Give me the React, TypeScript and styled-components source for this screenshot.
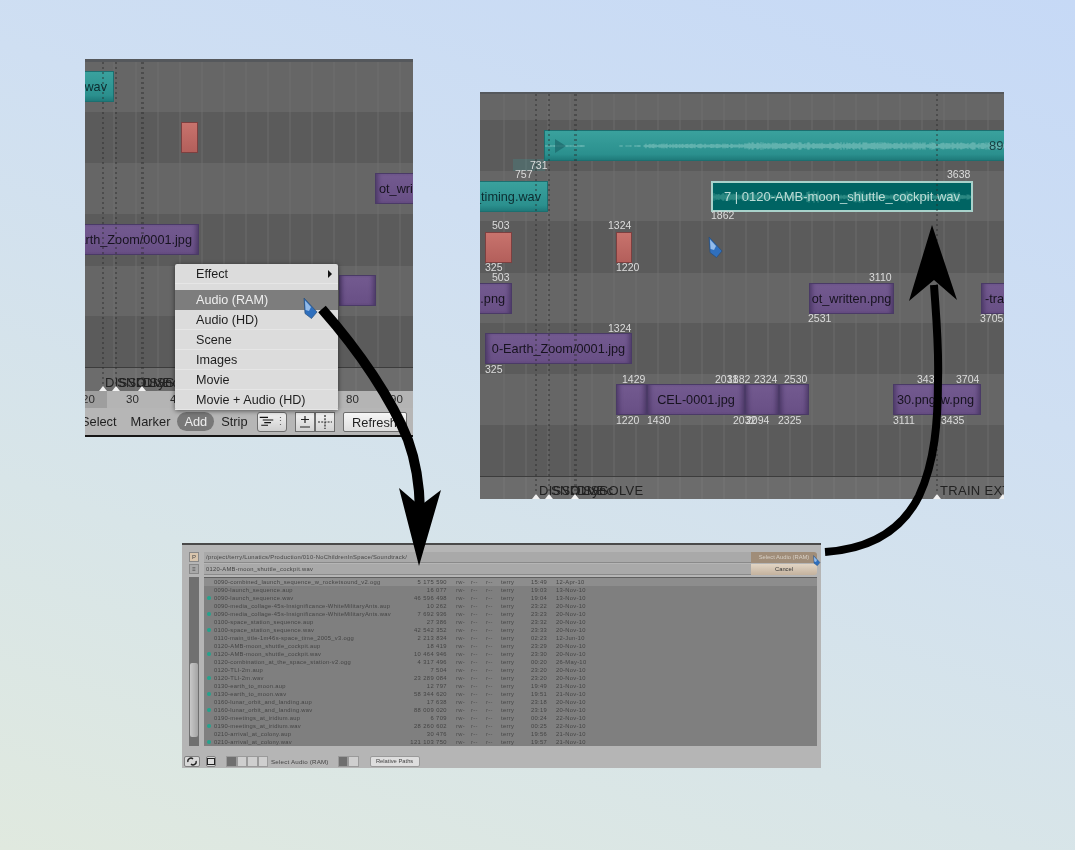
import React from 'react'
import styled, { createGlobalStyle } from 'styled-components'

const GlobalStyle = createGlobalStyle`
  html, body {
    margin: 0;
    padding: 0;
    height: 100%;
    overflow: hidden;
  }
  #root {
    height: 100%;
  }
`

type Kind = 'teal' | 'red' | 'purple' | 'selected' | 'ghost'
type Align = 'start' | 'center' | 'end'

interface StripData {
  kind: Kind
  x: number
  y: number
  w: number
  h?: number
  text?: string
  align?: Align
}

interface LabelData {
  x: number
  y: number
  text: string
}

const editorStrips: StripData[] = [
  { kind: 'teal', x: -10, y: 12, w: 39, text: 'wav', align: 'end' },
  { kind: 'red', x: 96, y: 63, w: 17 },
  { kind: 'purple', x: 290, y: 114, w: 60, text: 'ot_written.png', align: 'start' },
  { kind: 'purple', x: -40, y: 165, w: 154, text: '0-Earth_Zoom/0001.jpg', align: 'end' },
  { kind: 'purple', x: 254, y: 216, w: 37 },
]

const zoomStrips: StripData[] = [
  { kind: 'ghost', x: 33, y: 67, w: 32, h: 12 },
  { kind: 'teal', x: -30, y: 89, w: 98, text: '_timing.wav', align: 'end' },
  { kind: 'red', x: 5, y: 140, w: 27 },
  { kind: 'red', x: 136, y: 140, w: 16 },
  { kind: 'purple', x: -10, y: 191, w: 42, text: '.png', align: 'end' },
  { kind: 'purple', x: 329, y: 191, w: 85, text: 'ot_written.png' },
  { kind: 'purple', x: 501, y: 191, w: 40, text: '-trans', align: 'start' },
  { kind: 'purple', x: 5, y: 241, w: 147, text: '0-Earth_Zoom/0001.jpg' },
  { kind: 'purple', x: 136, y: 292, w: 31 },
  { kind: 'purple', x: 167, y: 292, w: 98, text: 'CEL-0001.jpg' },
  { kind: 'purple', x: 265, y: 292, w: 34 },
  { kind: 'purple', x: 299, y: 292, w: 30 },
  { kind: 'purple', x: 413, y: 292, w: 44, text: '30.png', align: 'start' },
  { kind: 'purple', x: 457, y: 292, w: 44, text: 'w.png', align: 'end' },
]

const zoomLabels: LabelData[] = [
  { x: 50, y: 73, text: '731' },
  { x: 35, y: 82, text: '757' },
  { x: 467, y: 82, text: '3638' },
  { x: 231, y: 123, text: '1862' },
  { x: 12, y: 133, text: '503' },
  { x: 128, y: 133, text: '1324' },
  { x: 5, y: 175, text: '325' },
  { x: 136, y: 175, text: '1220' },
  { x: 12, y: 185, text: '503' },
  { x: 389, y: 185, text: '3110' },
  { x: 328, y: 226, text: '2531' },
  { x: 500, y: 226, text: '3705' },
  { x: 128, y: 236, text: '1324' },
  { x: 5, y: 277, text: '325' },
  { x: 142, y: 287, text: '1429' },
  { x: 235, y: 287, text: '2031' },
  { x: 247, y: 287, text: '1882' },
  { x: 274, y: 287, text: '2324' },
  { x: 304, y: 287, text: '2530' },
  { x: 437, y: 287, text: '3434' },
  { x: 476, y: 287, text: '3704' },
  { x: 136, y: 328, text: '1220' },
  { x: 167, y: 328, text: '1430' },
  { x: 253, y: 328, text: '2032' },
  { x: 266, y: 328, text: '2094' },
  { x: 298, y: 328, text: '2325' },
  { x: 413, y: 328, text: '3111' },
  { x: 461, y: 328, text: '3435' },
]

const files = [
  ['0090-combined_launch_sequence_w_rocketsound_v2.ogg', '5 175 590', '15:49', '12-Apr-10', 0],
  ['0090-launch_sequence.aup', '16 077', '19:03', '13-Nov-10', 0],
  ['0090-launch_sequence.wav', '46 596 498', '19:04', '13-Nov-10', 1],
  ['0090-media_collage-45s-Insignificance-WhiteMilitaryAnts.aup', '10 262', '23:22', '20-Nov-10', 0],
  ['0090-media_collage-45s-Insignificance-WhiteMilitaryAnts.wav', '7 692 936', '23:23', '20-Nov-10', 1],
  ['0100-space_station_sequence.aup', '27 386', '23:32', '20-Nov-10', 0],
  ['0100-space_station_sequence.wav', '42 542 352', '23:33', '20-Nov-10', 1],
  ['0110-main_title-1m46s-space_time_2005_v3.ogg', '2 213 834', '02:23', '12-Jun-10', 0],
  ['0120-AMB-moon_shuttle_cockpit.aup', '18 419', '23:29', '20-Nov-10', 0],
  ['0120-AMB-moon_shuttle_cockpit.wav', '10 464 946', '23:30', '20-Nov-10', 1],
  ['0120-combination_at_the_space_station-v2.ogg', '4 317 496', '00:20', '26-May-10', 0],
  ['0120-TLI-2m.aup', '7 504', '23:20', '20-Nov-10', 0],
  ['0120-TLI-2m.wav', '23 289 084', '23:20', '20-Nov-10', 1],
  ['0130-earth_to_moon.aup', '12 797', '19:49', '21-Nov-10', 0],
  ['0130-earth_to_moon.wav', '58 344 620', '19:51', '21-Nov-10', 1],
  ['0160-lunar_orbit_and_landing.aup', '17 638', '23:18', '20-Nov-10', 0],
  ['0160-lunar_orbit_and_landing.wav', '88 009 020', '23:19', '20-Nov-10', 1],
  ['0190-meetings_at_iridium.aup', '6 709', '00:24', '22-Nov-10', 0],
  ['0190-meetings_at_iridium.wav', '28 260 602', '00:25', '22-Nov-10', 1],
  ['0210-arrival_at_colony.aup', '30 476', '19:56', '21-Nov-10', 0],
  ['0210-arrival_at_colony.wav', '121 103 750', '19:57', '21-Nov-10', 1],
] as const

// little repeatable noise so the wave forms look irregular
const noise = (x: number) => {
  const v = Math.sin(x * 12.9898) * 43758.5453
  return v - Math.floor(v)
}

const wavePath = (width: number, mid: number, amp: (x: number) => number) => {
  let d = ''
  for (let x = 0; x < width; x += 1) {
    const a = amp(x)
    if (a <= 0) continue
    const h = a * (0.35 + 0.65 * noise(x))
    d += `M${x} ${(mid - h).toFixed(1)}V${(mid + h).toFixed(1)}`
  }
  return d
}

const longWave = wavePath(460, 15, (x) => {
  if (x < 40) return 1
  if (x < 75) return 0
  if (x < 100) return x % 9 < 6 ? 1 : 0
  if (x < 200) return 2.4
  return 3.8
})

const selectedWave = wavePath(262, 14, (x) => {
  if (x < 60) return 4
  return x % 47 < 12 ? 6 : 2.5
})

const ArrowOverlay = () => (
  <Overlay viewBox="0 0 1075 850">
    <path
      d="M322 309C360 352 392 400 408 440C416 462 420 484 420 515"
      fill="none"
      stroke="#000"
      strokeWidth="10"
    />
    <polygon points="419,566 399,488 420,506 441,490" fill="#000" />
    <path
      d="M825 552C870 549 902 530 919 496C935 462 938 420 938 380C939 345 936 315 934 285"
      fill="none"
      stroke="#000"
      strokeWidth="8"
    />
    <polygon points="932,225 909,301 934,280 957,300" fill="#000" />
  </Overlay>
)

const Cursor: React.FC<{ x: number; y: number; scale?: number }> = ({ x, y, scale = 1 }) => (
  <CursorSvg $x={x} $y={y} width={15 * scale} height={22 * scale} viewBox="0 0 15 22">
    <polygon points="1,1 14,15 8.5,21.5 2,16.5" fill="#2f6fbd" stroke="#2a4d78" strokeWidth="0.7" />
    <polygon points="2,3.5 8,10 6,14 2.6,13" fill="#93bbea" />
  </CursorSvg>
)

const SplitIcon = () => (
  <svg width="20" height="15" viewBox="0 0 20 15">
    <path d="M1 2h11M5 5.5h14M7 9h9M3 12.5h9" stroke="#111" strokeWidth="1.5" fill="none" />
  </svg>
)

const PlusMinusIcon = () => (
  <svg width="14" height="14" viewBox="0 0 14 14">
    <path d="M7 1v7M3 4.5h8M2 12h10" stroke="#222" strokeWidth="1.2" fill="none" />
  </svg>
)

const CrossIcon = () => (
  <svg width="16" height="16" viewBox="0 0 16 16">
    <path d="M8 1v14M1 8h14" stroke="#222" strokeWidth="1.2" strokeDasharray="2 1.2" fill="none" />
  </svg>
)

const renderStrips = (strips: StripData[]) =>
  strips.map((strip, i) => (
    <Strip
      key={i}
      $kind={strip.kind}
      $x={strip.x}
      $y={strip.y}
      $w={strip.w}
      $h={strip.h ?? 31}
      $align={strip.align ?? 'center'}
    >
      {strip.text}
    </Strip>
  ))

const App: React.FC = () => {
  return (
    <Desktop>
      <GlobalStyle />

      <EditorWindow $x={85} $y={59} $w={328} $h={381} $gridX={8}>
        <TopEdge />
        <Track $h={50} />
        <Track $h={51} $dark />
        <Track $h={51} />
        <Track $h={52} $dark />
        <Track $h={50} />
        <Track $h={51} $dark />
        <MarkerBand $h={24}>
          <MarkerText $x={20}>DISSOLVE</MarkerText>
          <MarkerText $x={32}>SND Sync</MarkerText>
          <MarkerText $x={58}>DISSOLVE</MarkerText>
        </MarkerBand>
        <Ruler>
          <RulerShade />
          <RulerNumber $x={-3}>20</RulerNumber>
          <RulerNumber $x={41}>30</RulerNumber>
          <RulerNumber $x={85}>40</RulerNumber>
          <RulerNumber $x={261}>80</RulerNumber>
          <RulerNumber $x={305}>90</RulerNumber>
        </Ruler>
        <HeaderBar>
          <MenuWord>Select</MenuWord>
          <MenuWord>Marker</MenuWord>
          <MenuPill>Add</MenuPill>
          <MenuWord>Strip</MenuWord>
          <ModeSelect>
            <SplitIcon />
            <UpDown>⋮</UpDown>
          </ModeSelect>
          <ButtonGroup>
            <IconButton>
              <PlusMinusIcon />
            </IconButton>
            <IconButton>
              <CrossIcon />
            </IconButton>
          </ButtonGroup>
          <RefreshButton>Refresh</RefreshButton>
        </HeaderBar>

        {renderStrips(editorStrips)}
        <DotLine $x={17} $y={3} $h={328} />
        <DotLine $x={30} $y={3} $h={328} />
        <DotLine $x={56} $y={3} $h={328} $thick />
        <MarkerArrow $x={17} $y={327} />
        <MarkerArrow $x={30} $y={327} />
        <MarkerArrow $x={56} $y={327} />

        <AddMenu>
          <MenuEntry>
            Effect
            <SubArrow />
          </MenuEntry>
          <MenuSeparator />
          <MenuEntry $active>Audio (RAM)</MenuEntry>
          <MenuEntry>Audio (HD)</MenuEntry>
          <MenuEntry>Scene</MenuEntry>
          <MenuEntry>Images</MenuEntry>
          <MenuEntry>Movie</MenuEntry>
          <MenuEntry>Movie + Audio (HD)</MenuEntry>
        </AddMenu>
      </EditorWindow>

      <EditorWindow $x={480} $y={92} $w={524} $h={407} $gridX={3}>
        <TopEdge $h={2} />
        <Track $h={26} />
        <Track $h={51} $dark />
        <Track $h={50} />
        <Track $h={52} $dark />
        <Track $h={50} />
        <Track $h={51} $dark />
        <Track $h={51} />
        <Track $h={51} $dark />
        <MarkerBand $h={23}>
          <MarkerText $x={59}>DISSOLVE</MarkerText>
          <MarkerText $x={71}>SND Sync</MarkerText>
          <MarkerText $x={97}>DISSOLVE</MarkerText>
          <MarkerText $x={460}>TRAIN EXT</MarkerText>
        </MarkerBand>

        {renderStrips(zoomStrips)}
        <Strip $kind="teal" $x={64} $y={38} $w={480} $h={31} $align="center">
          <WaveSvg viewBox="0 0 460 29" width={460} height={29}>
            <path d={longWave} stroke="#86c8c3" strokeWidth="1" fill="none" opacity="0.7" />
            <polygon points="10,8 10,22 21,15" fill="#1d6a6c" opacity="0.75" />
          </WaveSvg>
        </Strip>
        <Strip $kind="selected" $x={231} $y={89} $w={262} $h={31} $align="center">
          <WaveSvg viewBox="0 0 262 29" width={262} height={29}>
            <path d={selectedWave} stroke="#3f9a92" strokeWidth="1" fill="none" opacity="0.85" />
          </WaveSvg>
          <SelectedText>7 | 0120-AMB-moon_shuttle_cockpit.wav</SelectedText>
        </Strip>
        <StripCut $x={509} $y={46}>89</StripCut>

        <DotLine $x={55} $y={2} $h={405} />
        <DotLine $x={68} $y={2} $h={405} />
        <DotLine $x={94} $y={2} $h={405} $thick />
        <DotLine $x={456} $y={2} $h={405} />
        <MarkerArrow $x={55} $y={402} />
        <MarkerArrow $x={68} $y={402} />
        <MarkerArrow $x={94} $y={402} />
        <MarkerArrow $x={456} $y={402} />
        <MarkerArrow $x={522} $y={402} />

        {zoomLabels.map((label) => (
          <FrameLabel key={`${label.x}-${label.y}`} $x={label.x} $y={label.y}>
            {label.text}
          </FrameLabel>
        ))}
      </EditorWindow>

      <FileWindow>
        <PathRow>
          <SmallToggle $warm>P</SmallToggle>
          <PathField>/project/terry/Lunatics/Production/010-NoChildrenInSpace/Soundtrack/</PathField>
          <ActionButton $accent>Select Audio (RAM)</ActionButton>
        </PathRow>
        <PathRow>
          <SmallToggle>≡</SmallToggle>
          <PathField>0120-AMB-moon_shuttle_cockpit.wav</PathField>
          <ActionButton>Cancel</ActionButton>
        </PathRow>
        <ListArea>
          <ScrollTrack>
            <ScrollThumb />
          </ScrollTrack>
          <FileList>
            {files.map(([name, size, time, date, audio], i) => (
              <FileRow key={name} $first={i === 0}>
                <span>{audio ? <AudioDot /> : null}</span>
                <span>{name}</span>
                <FileSize>{size}</FileSize>
                <Perms>
                  <span>rw-</span>
                  <span>r--</span>
                  <span>r--</span>
                </Perms>
                <span>terry</span>
                <span>{time}</span>
                <span>{date}</span>
              </FileRow>
            ))}
          </FileList>
        </ListArea>
        <FileToolbar>
          <ToolGroup $w={16}>
            <svg width="10" height="9" viewBox="0 0 10 9">
              <path d="M1 5a3 3 0 0 1 5-3M9 4a3 3 0 0 1-5 3" stroke="#222" fill="none" strokeWidth="1.4" />
            </svg>
          </ToolGroup>
          <ToolGroup $w={10}>
            <svg width="8" height="7" viewBox="0 0 8 7">
              <rect x="0.5" y="0.5" width="7" height="6" fill="#ddd" stroke="#222" />
            </svg>
          </ToolGroup>
          <ToolSet>
            <ToolCell $on />
            <ToolCell />
            <ToolCell />
            <ToolCell />
          </ToolSet>
          <ToolLabel>Select Audio (RAM)</ToolLabel>
          <ToolSet>
            <ToolCell $on />
            <ToolCell />
          </ToolSet>
          <PathsButton>Relative Paths</PathsButton>
        </FileToolbar>
      </FileWindow>

      <ArrowOverlay />
      <Cursor x={303} y={297} />
      <Cursor x={708} y={236} />
      <Cursor x={813} y={555} scale={0.5} />
    </Desktop>
  )
}

const Desktop = styled.div`
  position: relative;
  width: 1075px;
  height: 850px;
  overflow: hidden;
  background: linear-gradient(200deg, #c6d9f6 0%, #cfdff2 35%, #d8e5e8 70%, #e0e9df 100%);
  font-family: 'Liberation Sans', Arial, sans-serif;
`

const EditorWindow = styled.div<{ $x: number; $y: number; $w: number; $h: number; $gridX: number }>`
  --grid-x: ${(p) => p.$gridX}px;
  position: absolute;
  left: ${(p) => p.$x}px;
  top: ${(p) => p.$y}px;
  width: ${(p) => p.$w}px;
  height: ${(p) => p.$h}px;
  display: flex;
  flex-direction: column;
  overflow: hidden;
  filter: blur(0.5px);
`

const TopEdge = styled.div<{ $h?: number }>`
  height: ${(p) => p.$h ?? 3}px;
  background: #55585c;
`

const gridLines = (alpha: number) =>
  `repeating-linear-gradient(90deg, transparent 0 20px, rgba(255, 255, 255, ${alpha}) 20px 22px)`

const Track = styled.div<{ $h: number; $dark?: boolean }>`
  height: ${(p) => p.$h}px;
  background-color: ${(p) => (p.$dark ? '#5b5b5b' : '#666666')};
  background-image: ${(p) => gridLines(p.$dark ? 0.05 : 0.025)};
  background-position: var(--grid-x) 0;
`

const MarkerBand = styled.div<{ $h: number }>`
  position: relative;
  height: ${(p) => p.$h}px;
  box-sizing: border-box;
  border-top: 1px solid #3c3c3c;
  background-color: #6c6c6c;
  background-image: ${gridLines(0.03)};
  background-position: var(--grid-x) 0;
`

const MarkerText = styled.span<{ $x: number }>`
  position: absolute;
  left: ${(p) => p.$x}px;
  bottom: 1px;
  font-size: 13px;
  line-height: 15px;
  letter-spacing: 0.3px;
  color: #222;
  white-space: nowrap;
`

const MarkerArrow = styled.div<{ $x: number; $y: number }>`
  position: absolute;
  left: ${(p) => p.$x - 3}px;
  top: ${(p) => p.$y}px;
  width: 0;
  height: 0;
  border-left: 4px solid transparent;
  border-right: 4px solid transparent;
  border-bottom: 5px solid #f2f2f2;
`

const DotLine = styled.div<{ $x: number; $y: number; $h: number; $thick?: boolean }>`
  position: absolute;
  left: ${(p) => p.$x}px;
  top: ${(p) => p.$y}px;
  width: ${(p) => (p.$thick ? 3 : 2)}px;
  height: ${(p) => p.$h}px;
  background-image: repeating-linear-gradient(180deg, rgba(40, 40, 40, 0.42) 0 2px, transparent 2px 5px);
`

const stripFill: Record<Kind, string> = {
  teal: 'linear-gradient(#3aa19d, #2b908e 80%, #1f7a7a)',
  red: 'linear-gradient(#c8736d, #b35f5b)',
  purple: 'linear-gradient(#735a90, #684f85)',
  selected: '#006463',
  ghost: 'rgba(60, 150, 150, 0.25)',
}

const stripEdge: Record<Kind, string> = {
  teal: '1px solid #1c6f70',
  red: '1px solid #7c4040',
  purple: '1px solid #4a3a66',
  selected: '2px solid #a9d2cb',
  ghost: 'none',
}

const stripInk: Record<Kind, string> = {
  teal: '#0c2c30',
  red: '#222222',
  purple: '#17131f',
  selected: '#bcdcd6',
  ghost: 'transparent',
}

const stripJustify: Record<Align, string> = {
  start: 'flex-start',
  center: 'center',
  end: 'flex-end',
}

const Strip = styled.div<{ $kind: Kind; $x: number; $y: number; $w: number; $h: number; $align: Align }>`
  position: absolute;
  left: ${(p) => p.$x}px;
  top: ${(p) => p.$y}px;
  width: ${(p) => p.$w}px;
  height: ${(p) => p.$h}px;
  box-sizing: border-box;
  display: flex;
  align-items: center;
  justify-content: ${(p) => stripJustify[p.$align]};
  padding: 0 6px 0 ${(p) => (p.$align === 'start' ? 3 : 6)}px;
  overflow: hidden;
  font-size: 12.7px;
  white-space: nowrap;
  background: ${(p) => stripFill[p.$kind]};
  border: ${(p) => stripEdge[p.$kind]};
  color: ${(p) => stripInk[p.$kind]};
  box-shadow: ${(p) =>
    p.$kind === 'purple'
      ? 'inset 5px 0 4px -3px rgba(50, 35, 75, 0.55), inset -5px 0 4px -3px rgba(50, 35, 75, 0.55)'
      : 'none'};
`

const WaveSvg = styled.svg`
  position: absolute;
  left: 0;
  top: 0;
`

const SelectedText = styled.span`
  position: relative;
  font-size: 13px;
`

const StripCut = styled.span<{ $x: number; $y: number }>`
  position: absolute;
  left: ${(p) => p.$x}px;
  top: ${(p) => p.$y}px;
  font-size: 13px;
  color: #173f42;
`

const FrameLabel = styled.span<{ $x: number; $y: number }>`
  position: absolute;
  left: ${(p) => p.$x}px;
  top: ${(p) => p.$y - 6}px;
  font-size: 10.5px;
  line-height: 12px;
  color: #dcdcdc;
`

const Ruler = styled.div`
  position: relative;
  height: 17px;
  background: #b4b4b4;
  font-size: 11.5px;
  color: #2c2c2c;
`

const RulerShade = styled.div`
  width: 22px;
  height: 100%;
  background: #9e9e9e;
`

const RulerNumber = styled.span<{ $x: number }>`
  position: absolute;
  left: ${(p) => p.$x}px;
  top: 2px;
`

const HeaderBar = styled.div`
  height: 29px;
  box-sizing: border-box;
  border-bottom: 2px solid #161616;
  background: #b6b6b6;
  display: flex;
  align-items: center;
  margin-left: -11px;
  font-size: 12.8px;
  color: #1f1f1f;
`

const MenuWord = styled.span`
  padding: 0 7px;
`

const MenuPill = styled.span`
  padding: 0 7px;
  line-height: 19px;
  border-radius: 10px;
  background: #787878;
  color: #eeeeee;
`

const ModeSelect = styled.div`
  display: flex;
  align-items: center;
  width: 30px;
  height: 20px;
  margin-left: 2px;
  padding-left: 1px;
  box-sizing: border-box;
  border: 1px solid #6e6e6e;
  border-radius: 3px;
  background: linear-gradient(#f2f2f2, #cfcfcf);
`

const UpDown = styled.span`
  font-size: 11px;
  color: #666;
  margin-left: 1px;
`

const ButtonGroup = styled.div`
  display: flex;
  margin-left: 8px;
`

const IconButton = styled.div`
  display: flex;
  align-items: center;
  justify-content: center;
  width: 20px;
  height: 20px;
  box-sizing: border-box;
  border: 1px solid #6e6e6e;
  background: linear-gradient(#f2f2f2, #d2d2d2);
`

const RefreshButton = styled.div`
  width: 64px;
  height: 20px;
  margin-left: 8px;
  box-sizing: border-box;
  border: 1px solid #6e6e6e;
  border-radius: 2px;
  background: linear-gradient(#f6f6f6, #dedede);
  text-align: center;
  line-height: 19px;
`

const AddMenu = styled.div`
  position: absolute;
  left: 90px;
  top: 205px;
  width: 163px;
  height: 146px;
  display: flex;
  flex-direction: column;
  background: #dcdcdc;
  border-radius: 2px;
  box-shadow: 0 1px 5px rgba(0, 0, 0, 0.55);
  font-size: 12.6px;
  color: #1e1e1e;
`

const MenuEntry = styled.div<{ $active?: boolean }>`
  position: relative;
  height: 20px;
  flex: none;
  box-sizing: border-box;
  padding-left: 21px;
  line-height: 20px;
  background: ${(p) => (p.$active ? '#7d7d7d' : 'transparent')};
  color: ${(p) => (p.$active ? '#eeeeee' : '#1e1e1e')};
  border-bottom: 1px solid ${(p) => (p.$active ? '#7d7d7d' : '#e6e6e6')};
`

const MenuSeparator = styled.div`
  height: 6px;
  flex: none;
`

const SubArrow = styled.i`
  position: absolute;
  right: 6px;
  top: 6px;
  width: 0;
  height: 0;
  border-top: 4px solid transparent;
  border-bottom: 4px solid transparent;
  border-left: 4px solid #111;
`

const FileWindow = styled.div`
  position: absolute;
  left: 182px;
  top: 543px;
  width: 639px;
  height: 225px;
  box-sizing: border-box;
  padding: 6px 4px 0 7px;
  border-top: 2px solid #4a4a4a;
  background: #b5b5b5;
  display: flex;
  flex-direction: column;
  font-size: 5.8px;
  color: #444444;
  filter: blur(0.6px);
`

const PathRow = styled.div`
  display: flex;
  align-items: center;
  height: 12px;
  flex: none;
`

const SmallToggle = styled.div<{ $warm?: boolean }>`
  width: 10px;
  height: 10px;
  margin-right: 5px;
  box-sizing: border-box;
  border: 1px solid #888;
  background: ${(p) => (p.$warm ? '#d8c5ad' : '#a8a8a8')};
  text-align: center;
  line-height: 8px;
  font-size: 6px;
`

const PathField = styled.div`
  flex: 1;
  height: 11px;
  box-sizing: border-box;
  padding-left: 2px;
  background: #a9a9a9;
  border-bottom: 1px solid #8a8a8a;
  line-height: 10px;
  letter-spacing: 0.3px;
  white-space: nowrap;
`

const ActionButton = styled.div<{ $accent?: boolean }>`
  width: 66px;
  height: 11px;
  text-align: center;
  line-height: 11px;
  border-radius: 0 3px 3px 0;
  background: ${(p) => (p.$accent ? '#a08d79' : 'linear-gradient(#e2d5c4, #c4b29e)')};
  color: ${(p) => (p.$accent ? '#d8d0c6' : '#333')};
`

const ListArea = styled.div`
  display: flex;
  flex: none;
  height: 169px;
  margin-top: 2px;
`

const ScrollTrack = styled.div`
  position: relative;
  width: 10px;
  margin-right: 5px;
  background: #707070;
`

const ScrollThumb = styled.div`
  position: absolute;
  left: 1px;
  top: 86px;
  width: 8px;
  height: 74px;
  border-radius: 2px;
  background: linear-gradient(90deg, #c8c8c8, #a4a4a4);
`

const FileList = styled.div`
  flex: 1;
  background: #7f7f7f;
  border-top: 1px solid #5f5f5f;
  overflow: hidden;
`

const FileRow = styled.div<{ $first?: boolean }>`
  display: grid;
  grid-template-columns: 10px 190px 43px 54px 30px 25px 1fr;
  height: 8px;
  line-height: 8px;
  letter-spacing: 0.3px;
  white-space: nowrap;
  background: ${(p) => (p.$first ? '#8d8d8d' : 'transparent')};
`

const FileSize = styled.span`
  text-align: right;
  white-space: nowrap;
  letter-spacing: 0.4px;
`

const Perms = styled.span`
  display: grid;
  grid-template-columns: 15px 15px 15px;
  padding-left: 9px;
  color: #4c4c4c;
`

const AudioDot = styled.i`
  display: block;
  width: 4px;
  height: 4px;
  margin: 2px 0 0 3px;
  border-radius: 50%;
  background: #23a48e;
`

const FileToolbar = styled.div`
  display: flex;
  align-items: center;
  flex: none;
  height: 14px;
  margin: 8px 0 0 -5px;
`

const ToolGroup = styled.div<{ $w: number }>`
  display: flex;
  align-items: center;
  justify-content: center;
  width: ${(p) => p.$w}px;
  height: 11px;
  margin-right: 6px;
  border: 1px solid #7f7f7f;
  border-radius: 2px;
  box-sizing: border-box;
  background: #d8d8d8;
`

const ToolSet = styled.div`
  display: flex;
  margin-left: 4px;
`

const ToolCell = styled.div<{ $on?: boolean }>`
  width: 10.5px;
  height: 11px;
  box-sizing: border-box;
  border: 1px solid #9a9a9a;
  background: ${(p) => (p.$on ? '#6f6f6f' : '#cfcfcf')};
`

const ToolLabel = styled.span`
  margin: 0 5px 0 3px;
  font-size: 6.2px;
  letter-spacing: 0.2px;
`

const PathsButton = styled.div`
  width: 50px;
  height: 11px;
  margin-left: 11px;
  border: 1px solid #999;
  border-radius: 2px;
  box-sizing: border-box;
  background: #dedede;
  text-align: center;
  line-height: 9px;
`

const Overlay = styled.svg`
  position: absolute;
  left: 0;
  top: 0;
  width: 1075px;
  height: 850px;
  pointer-events: none;
`

const CursorSvg = styled.svg<{ $x: number; $y: number }>`
  position: absolute;
  left: ${(p) => p.$x}px;
  top: ${(p) => p.$y}px;
`

export default App
